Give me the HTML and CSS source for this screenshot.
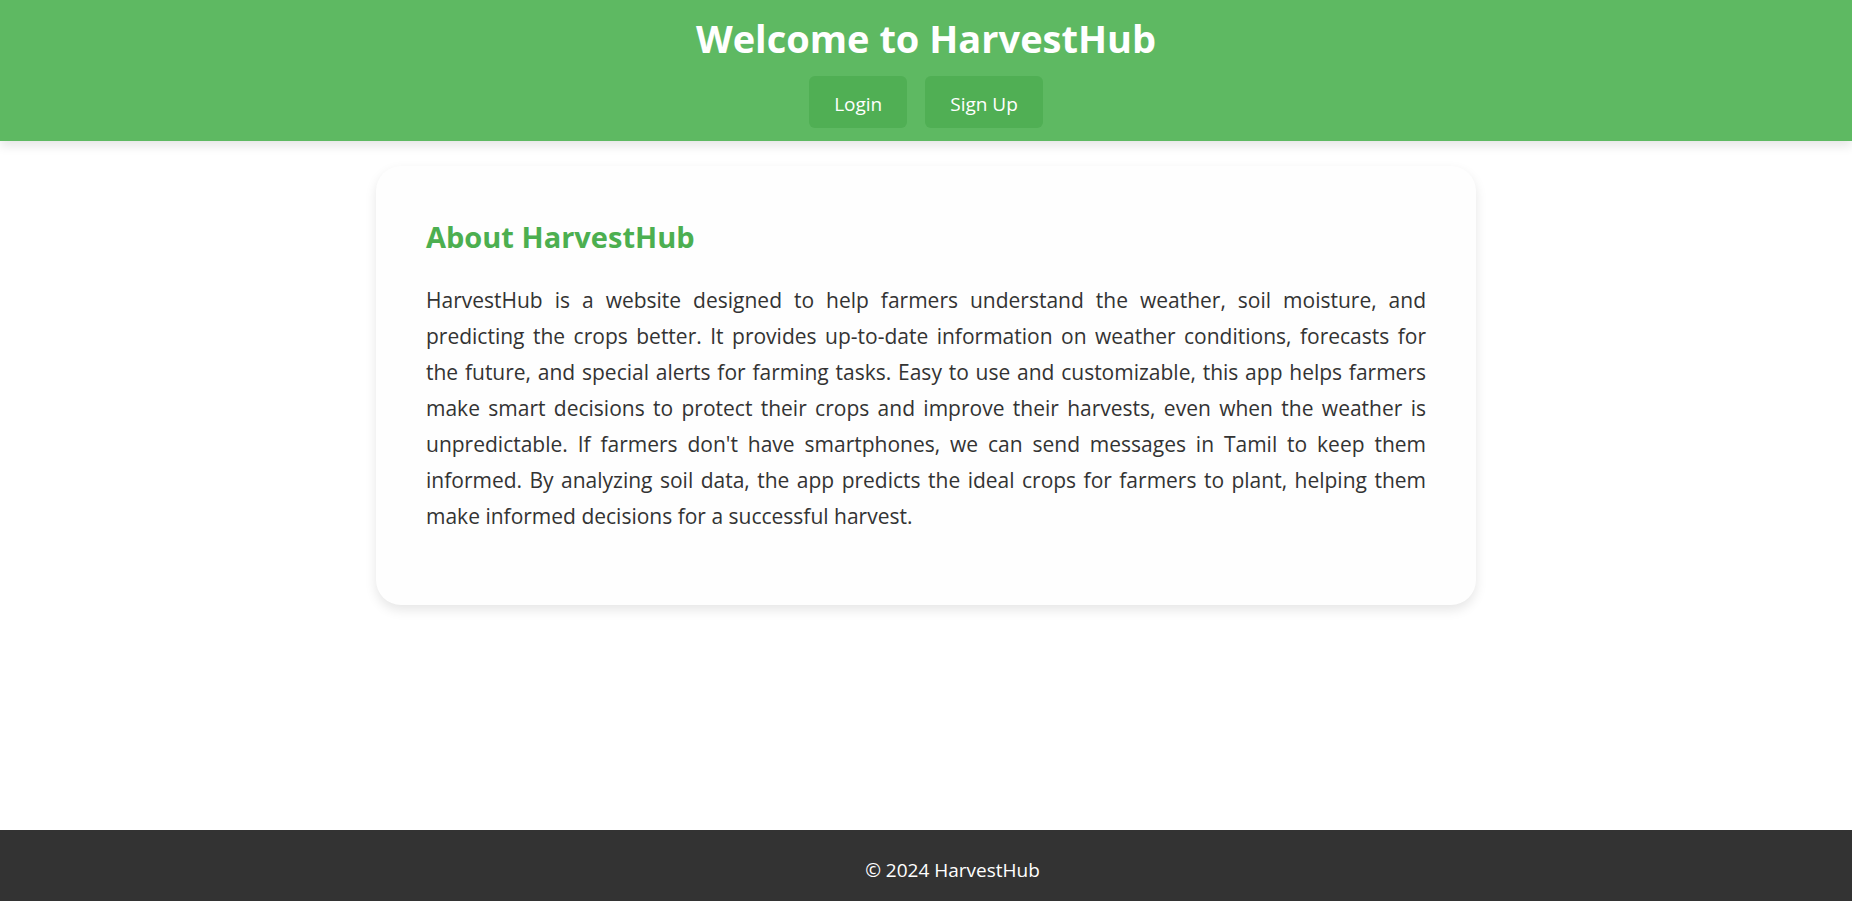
FILE: index.html
```html
<!DOCTYPE html>
<html lang="en">
<head>
  <meta charset="UTF-8">
  <meta name="viewport" content="width=device-width, initial-scale=1">
  <title>HarvestHub</title>
  <link rel="stylesheet" href="styles.css">
</head>
<body>
  <header class="site-header">
    <h1 class="site-title">Welcome to HarvestHub</h1>
    <nav class="site-nav">
      <a class="nav-link" href="#login">Login</a>
      <a class="nav-link" href="#signup">Sign Up</a>
    </nav>
  </header>
  <main class="content">
    <section class="card">
      <h2 class="card-title">About HarvestHub</h2>
      <p class="card-text">HarvestHub is a website designed to help farmers understand the weather, soil moisture, and predicting the crops better. It provides up-to-date information on weather conditions, forecasts for the future, and special alerts for farming tasks. Easy to use and customizable, this app helps farmers make smart decisions to protect their crops and improve their harvests, even when the weather is unpredictable. If farmers don't have smartphones, we can send messages in Tamil to keep them informed. By analyzing soil data, the app predicts the ideal crops for farmers to plant, helping them make informed decisions for a successful harvest.</p>
    </section>
  </main>
  <footer class="site-footer">
    <p class="copyright">© 2024 HarvestHub</p>
  </footer>
</body>
</html>
```
FILE: styles.css
```css
* {
  box-sizing: border-box;
}

body {
  display: flex;
  flex-direction: column;
  min-height: 100vh;
  margin: 0;
  background: #fff;
  color: #333;
  font-family: "Segoe UI", "Open Sans", "Noto Sans", sans-serif;
}

.site-header {
  display: flex;
  flex-direction: column;
  align-items: center;
  gap: 12px;
  padding: 12px 24px 13px;
  background: #5eb962;
  box-shadow: 0 5px 10px rgba(0, 0, 0, 0.1);
  color: #fff;
}

.site-title {
  margin: 0;
  font-size: 38px;
  line-height: 52px;
  text-align: center;
}

.site-nav {
  display: flex;
  gap: 18px;
}

.nav-link {
  padding: 14px 25px 10px;
  border-radius: 6px;
  background: #50af54;
  color: #fff;
  font-size: 19px;
  line-height: 28px;
  text-decoration: none;
}

.content {
  flex: 1;
  padding: 25px 24px;
}

.card {
  max-width: 1100px;
  margin: 0 auto;
  padding: 50px 50px 71px;
  border-radius: 25px;
  background: #fefefe;
  box-shadow: 0 5px 12px rgba(0, 0, 0, 0.1);
}

.card-title {
  margin: 0 0 24px;
  color: #4caf50;
  font-size: 29px;
  line-height: 42px;
}

.card-text {
  margin: 0;
  font-size: 21px;
  line-height: 36px;
  text-align: justify;
}

.site-footer {
  padding: 26px 0 17px 53px;
  background: #333;
  color: #fff;
  text-align: center;
}

.copyright {
  margin: 0;
  font-size: 19px;
  line-height: 28px;
}
```
